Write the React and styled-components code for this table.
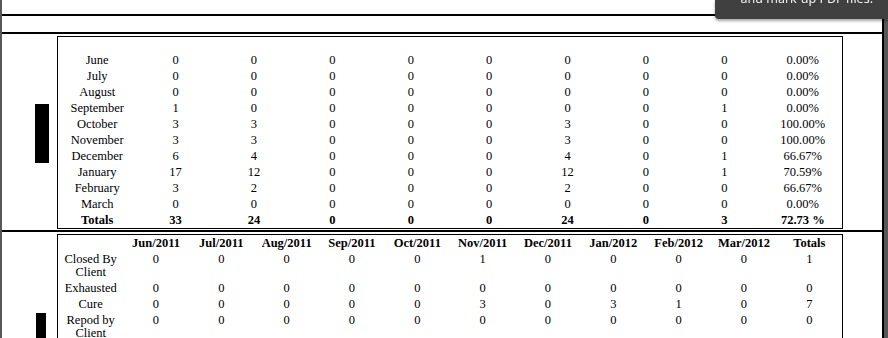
import React from "react";
import styled, { createGlobalStyle } from "styled-components";

const GlobalStyle = createGlobalStyle`
  html, body {
    margin: 0;
    padding: 0;
    background: #fff;
  }
`;

const Page = styled.div`
  display: flex;
  height: 338px;
  overflow: hidden;
  padding-top: 14px;
  box-sizing: border-box;
  border-left: 2px solid #585858;
  border-right: 4px solid #585858;
  font-family: "Liberation Serif", "Times New Roman", serif;
  color: #000;
`;

const Frame = styled.div`
  flex: 1;
  border-top: 2px solid #000;
  border-right: 2px solid #000;
`;

const HeaderBand = styled.div`
  height: 16px;
  border-bottom: 2px solid #000;
`;

const Section = styled.div`
  display: flex;
  padding: 2px 0 ${({ last }) => (last ? "0" : "1px")};
  border-bottom: ${({ last }) => (last ? "none" : "2px solid #000")};
`;

const Side = styled.div`
  width: 55px;
  flex-shrink: 0;
`;

const Marker = styled.div`
  width: ${({ w }) => w}px;
  height: ${({ h }) => h}px;
  margin-top: ${({ top }) => top}px;
  margin-left: ${({ left }) => left}px;
  background: #000;
`;

const Box = styled.div`
  width: 784px;
  border: 1px solid #000;
  ${({ open }) => (open ? "border-bottom: none;" : "")}
`;

const Table = styled.table`
  width: 100%;
  table-layout: fixed;
  border-collapse: collapse;
  font-size: 12.5px;
`;

const Cell = styled.td`
  padding: 1.5px 1px;
  line-height: 13px;
  text-align: center;
  vertical-align: top;
  font-weight: ${({ bold }) => (bold ? "bold" : "normal")};
`;

const HeadCell = styled.th`
  padding: ${({ spacer }) => (spacer ? "0" : "1.5px 1px")};
  line-height: 13px;
  height: ${({ spacer }) => (spacer ? "15px" : "auto")};
  text-align: center;
  font-weight: bold;
`;

const Tooltip = styled.div`
  position: fixed;
  top: 0;
  right: 0;
  width: 173px;
  height: 19px;
  overflow: hidden;
  box-sizing: border-box;
  padding-right: 15px;
  background: #404040;
  border-bottom-left-radius: 4px;
  box-shadow: 0 2px 3px rgba(0, 0, 0, 0.35);
  color: #f2f2f2;
  font-family: "Noto Sans", "DejaVu Sans", sans-serif;
  font-size: 12.5px;
  line-height: 18px;
  text-align: right;
`;

const TipText = styled.div`
  margin-top: -10px;
  white-space: nowrap;
`;

const monthly = [
  ["June", 0, 0, 0, 0, 0, 0, 0, 0, "0.00%"],
  ["July", 0, 0, 0, 0, 0, 0, 0, 0, "0.00%"],
  ["August", 0, 0, 0, 0, 0, 0, 0, 0, "0.00%"],
  ["September", 1, 0, 0, 0, 0, 0, 0, 1, "0.00%"],
  ["October", 3, 3, 0, 0, 0, 3, 0, 0, "100.00%"],
  ["November", 3, 3, 0, 0, 0, 3, 0, 0, "100.00%"],
  ["December", 6, 4, 0, 0, 0, 4, 0, 1, "66.67%"],
  ["January", 17, 12, 0, 0, 0, 12, 0, 1, "70.59%"],
  ["February", 3, 2, 0, 0, 0, 2, 0, 0, "66.67%"],
  ["March", 0, 0, 0, 0, 0, 0, 0, 0, "0.00%"],
];

const monthlyTotals = ["Totals", 33, 24, 0, 0, 0, 24, 0, 3, "72.73 %"];

const periods = [
  "Jun/2011",
  "Jul/2011",
  "Aug/2011",
  "Sep/2011",
  "Oct/2011",
  "Nov/2011",
  "Dec/2011",
  "Jan/2012",
  "Feb/2012",
  "Mar/2012",
  "Totals",
];

const reasons = [
  ["Closed By Client", 0, 0, 0, 0, 0, 1, 0, 0, 0, 0, 1],
  ["Exhausted", 0, 0, 0, 0, 0, 0, 0, 0, 0, 0, 0],
  ["Cure", 0, 0, 0, 0, 0, 3, 0, 3, 1, 0, 7],
  ["Repod by Client", 0, 0, 0, 0, 0, 0, 0, 0, 0, 0, 0],
  ["Totals", 0, 0, 0, 0, 0, 4, 0, 3, 1, 0, 8],
];

const App = () => {
  return (
    <>
      <GlobalStyle />
      <Page>
        <Frame>
          <HeaderBand />

          <Section>
            <Side>
              <Marker w={14} h={59} top={68} left={33} />
            </Side>
            <Box>
              <Table>
                <thead>
                  <tr>
                    {Array.from({ length: 10 }).map((_, i) => (
                      <HeadCell key={i} spacer />
                    ))}
                  </tr>
                </thead>
                <tbody>
                  {monthly.map((row) => (
                    <tr key={row[0]}>
                      {row.map((value, i) => (
                        <Cell key={i}>{value}</Cell>
                      ))}
                    </tr>
                  ))}
                  <tr>
                    {monthlyTotals.map((value, i) => (
                      <Cell key={i} bold>
                        {value}
                      </Cell>
                    ))}
                  </tr>
                </tbody>
              </Table>
            </Box>
          </Section>

          <Section last>
            <Side>
              <Marker w={10} h={60} top={79} left={34} />
            </Side>
            <Box open>
              <Table>
                <thead>
                  <tr>
                    <HeadCell />
                    {periods.map((p) => (
                      <HeadCell key={p}>{p}</HeadCell>
                    ))}
                  </tr>
                </thead>
                <tbody>
                  {reasons.map((row) => (
                    <tr key={row[0]}>
                      {row.map((value, i) => (
                        <Cell key={i} bold={row[0] === "Totals"}>
                          {value}
                        </Cell>
                      ))}
                    </tr>
                  ))}
                </tbody>
              </Table>
            </Box>
          </Section>
        </Frame>
      </Page>
      <Tooltip>
        <TipText>and mark-up PDF files.</TipText>
      </Tooltip>
    </>
  );
};

export default App;
